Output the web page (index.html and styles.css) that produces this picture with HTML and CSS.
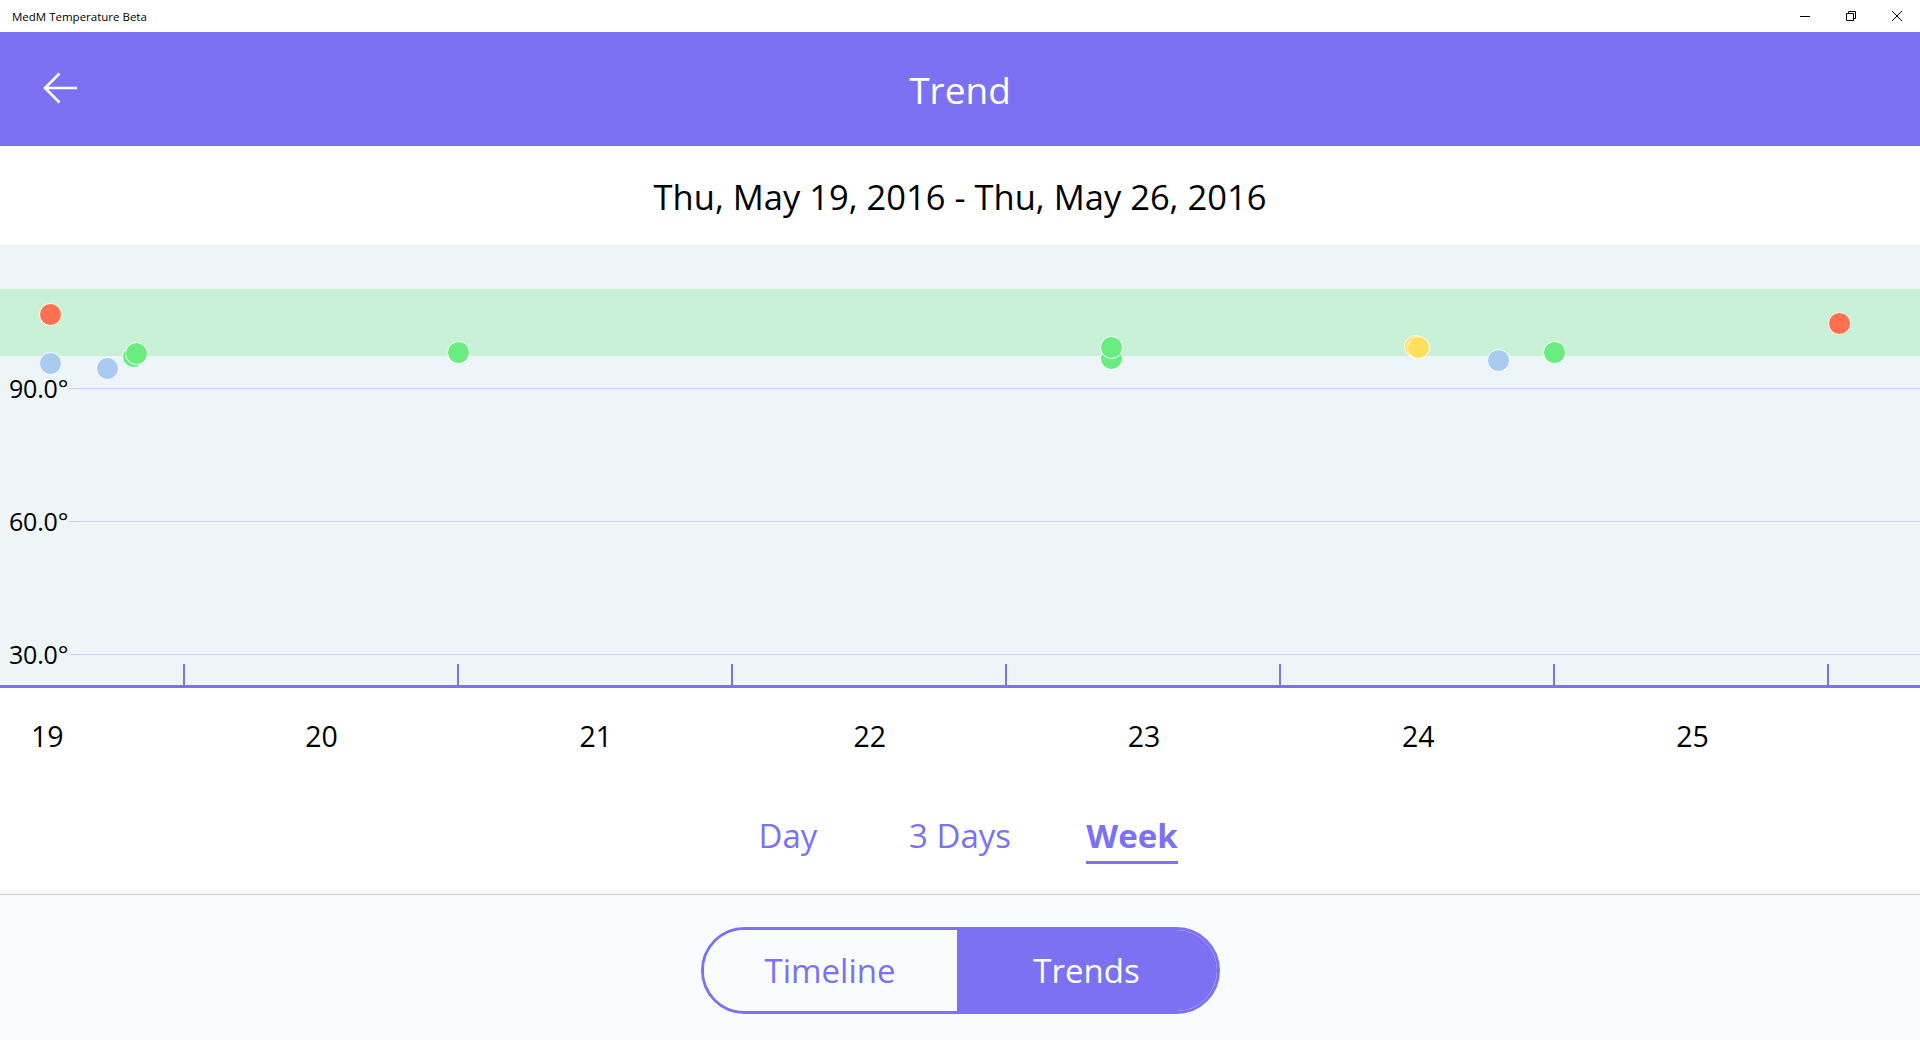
FILE: index.html
```html
<!DOCTYPE html>
<html lang="en">
<head>
<meta charset="utf-8">
<title>MedM Temperature Beta</title>
<link rel="stylesheet" href="styles.css">
</head>
<body>
<div class="app">
  <div class="titlebar">
    <span class="app-name">MedM Temperature Beta</span>
    <div class="win-controls">
      <span class="win-btn">
        <svg width="10" height="10" viewBox="0 0 10 10"><path d="M0 5.5H10" stroke="#000" stroke-width="1"/></svg>
      </span>
      <span class="win-btn">
        <svg width="10" height="10" viewBox="0 0 10 10"><path d="M0.5 2.5H7.5V9.5H0.5Z M2.5 2.5V0.5H9.5V7.5H7.5" stroke="#000" stroke-width="1" fill="none"/></svg>
      </span>
      <span class="win-btn">
        <svg width="10" height="10" viewBox="0 0 10 10"><path d="M0 0L10 10M10 0L0 10" stroke="#000" stroke-width="1"/></svg>
      </span>
    </div>
  </div>

  <header class="header">
    <div class="header-left">
      <button class="back-btn" aria-label="Back">
        <svg width="34" height="32" viewBox="0 0 34 32"><path d="M16.5 1.5L2 16L16.5 30.5M2 16H34" stroke="#fff" stroke-width="2.6" fill="none"/></svg>
      </button>
    </div>
    <h1 class="header-title">Trend</h1>
    <div class="header-right"></div>
  </header>

  <div class="date-range">Thu, May 19, 2016 - Thu, May 26, 2016</div>

  <div class="chart">
    <div class="band"></div>
    <div class="gridline" style="top:128px"><span class="ylabel">90.0°</span><span class="rule"></span></div>
    <div class="gridline" style="top:261px"><span class="ylabel">60.0°</span><span class="rule"></span></div>
    <div class="gridline" style="top:394px"><span class="ylabel">30.0°</span><span class="rule"></span></div>

    <span class="tick" style="left:183px"></span>
    <span class="tick" style="left:457px"></span>
    <span class="tick" style="left:731px"></span>
    <span class="tick" style="left:1005px"></span>
    <span class="tick" style="left:1279px"></span>
    <span class="tick" style="left:1553px"></span>
    <span class="tick" style="left:1827px"></span>

    <span class="dot red" style="left:50px;top:69px"></span>
    <span class="dot blue" style="left:50px;top:118px"></span>
    <span class="dot blue" style="left:107px;top:123px"></span>
    <span class="dot green" style="left:133px;top:111px"></span>
    <span class="dot green" style="left:136px;top:108px"></span>
    <span class="dot green" style="left:458px;top:107px"></span>
    <span class="dot green" style="left:1111px;top:113px"></span>
    <span class="dot green" style="left:1111px;top:102px"></span>
    <span class="dot yellow" style="left:1415px;top:101px"></span>
    <span class="dot yellow" style="left:1418px;top:102px"></span>
    <span class="dot blue" style="left:1498px;top:115px"></span>
    <span class="dot green" style="left:1554px;top:107px"></span>
    <span class="dot red" style="left:1839px;top:78px"></span>
  </div>

  <div class="xaxis">
    <span class="xlabel">19</span>
    <span class="xlabel">20</span>
    <span class="xlabel">21</span>
    <span class="xlabel">22</span>
    <span class="xlabel">23</span>
    <span class="xlabel">24</span>
    <span class="xlabel">25</span>
  </div>

  <nav class="ranges">
    <span class="range"><span class="range-text">Day</span></span>
    <span class="range"><span class="range-text">3 Days</span></span>
    <span class="range"><span class="range-text active">Week</span></span>
  </nav>

  <footer class="bottom">
    <div class="segmented">
      <span class="seg seg-left">Timeline</span>
      <span class="seg seg-right">Trends</span>
    </div>
  </footer>
</div>
</body>
</html>
```

FILE: styles.css
```css
* { box-sizing: border-box; }

html, body {
  margin: 0;
  padding: 0;
  background: #ffffff;
}

body {
  font-family: "Open Sans", "Noto Sans", sans-serif;
  color: #000;
}

.app {
  width: 1920px;
  height: 1040px;
  overflow: hidden;
  display: flex;
  flex-direction: column;
}

/* Title bar */
.titlebar {
  height: 32px;
  flex: none;
  display: flex;
  align-items: center;
  justify-content: space-between;
  background: #fff;
  padding-left: 12px;
}

.app-name {
  font-size: 11.5px;
  color: #000;
}

.win-controls {
  display: flex;
  height: 32px;
}

.win-btn {
  width: 46px;
  height: 32px;
  display: flex;
  align-items: center;
  justify-content: center;
}

/* Header */
.header {
  height: 114px;
  flex: none;
  background: #7c71f3;
  display: grid;
  grid-template-columns: 1fr auto 1fr;
  align-items: center;
}

.header-left {
  padding-left: 43px;
  display: flex;
  align-items: center;
}

.back-btn {
  border: 0;
  background: transparent;
  padding: 0;
  margin: 0;
  width: 34px;
  height: 32px;
  display: block;
  margin-top: -2px;
}

.back-btn svg { display: block; }

.header-title {
  margin: 0;
  font-size: 37px;
  font-weight: 400;
  color: #fff;
  line-height: 48px;
  padding-top: 2px;
}

/* Date */
.date-range {
  height: 99px;
  flex: none;
  display: flex;
  align-items: center;
  justify-content: center;
  font-size: 34.5px;
  color: #000;
  padding-top: 2px;
}

/* Chart */
.chart {
  position: relative;
  height: 443px;
  flex: none;
  background: #edf5f8;
  border-bottom: 3px solid #7c71f3;
  overflow: hidden;
}

.band {
  position: absolute;
  left: 0;
  right: 0;
  top: 44px;
  height: 67px;
  background: #c9f1d8;
}

.gridline {
  position: absolute;
  left: 0;
  right: 0;
  height: 30px;
  display: flex;
  align-items: center;
  padding-left: 9px;
  gap: 1px;
}

.ylabel {
  font-size: 25px;
  line-height: 30px;
  color: #000;
  letter-spacing: -0.2px;
}

.rule {
  flex: 1;
  height: 1px;
  background: #c9ccf4;
}

.tick {
  position: absolute;
  bottom: 0;
  width: 2px;
  height: 21px;
  background: #7c71f3;
}

.dot {
  position: absolute;
  width: 23px;
  height: 23px;
  margin-left: -11.5px;
  margin-top: -11.5px;
  border-radius: 50%;
  border: 1px solid #fff;
}

.dot.red { background: #ff7150; }
.dot.blue { background: #a9cbf2; }
.dot.green { background: #69ec80; }
.dot.yellow { background: #ffdf5c; }

/* X axis */
.xaxis {
  flex: none;
  display: flex;
  padding-left: 31px;
  padding-top: 30px;
}

.xlabel {
  width: 274.2px;
  flex: none;
  font-size: 28.5px;
  line-height: 36px;
  color: #000;
}

/* Ranges */
.ranges {
  flex: none;
  display: flex;
  justify-content: center;
  margin-top: 62px;
}

.range {
  width: 172px;
  display: flex;
  justify-content: center;
}

.range-text {
  font-size: 33px;
  line-height: 40px;
  color: #7c71f3;
  padding-bottom: 5px;
  border-bottom: 3px solid transparent;
}

.range-text.active {
  font-weight: 700;
  border-bottom-color: #7c71f3;
}

/* Bottom */
.bottom {
  flex: 1;
  margin-top: 30px;
  background: #f8fcfd;
  border-top: 1px solid #cfcfcf;
  box-shadow: 0 -3px 5px rgba(0, 0, 0, 0.04);
  display: flex;
  justify-content: center;
  padding-top: 32px;
}

.segmented {
  width: 519px;
  height: 87px;
  border: 3px solid #7c71f3;
  border-radius: 44px;
  overflow: hidden;
  display: flex;
}

.seg {
  display: flex;
  align-items: center;
  justify-content: center;
  font-size: 33px;
  line-height: 40px;
}

.seg-left {
  width: 253px;
  color: #7c71f3;
  background: #f8fcfd;
}

.seg-right {
  flex: 1;
  color: #fff;
  background: #7c71f3;
}
```
